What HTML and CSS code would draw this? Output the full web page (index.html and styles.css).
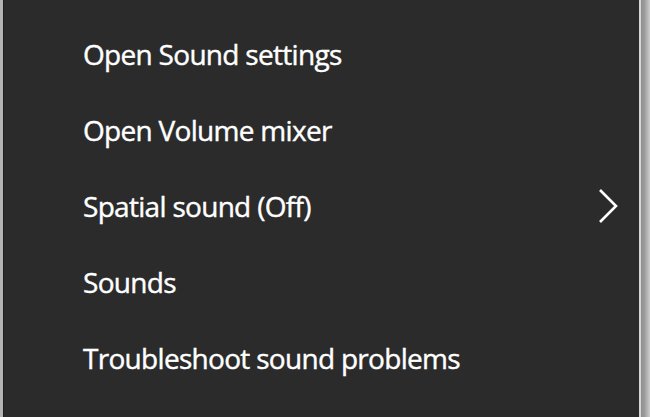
FILE: index.html
```html
<!DOCTYPE html>
<html>
<head>
<meta charset="utf-8">
<link rel="stylesheet" href="styles.css">
</head>
<body>
<div class="frame">
  <ul class="menu">
    <li class="item">Open Sound settings</li>
    <li class="item">Open Volume mixer</li>
    <li class="item has-sub">Spatial sound (Off)
      <svg class="chevron" width="22" height="36" viewBox="0 0 22 36"><path d="M3 2 L19 18 L3 34" fill="none" stroke="#ffffff" stroke-width="2.6"/></svg>
    </li>
    <li class="item">Sounds</li>
    <li class="item">Troubleshoot sound problems</li>
  </ul>
  <div class="edge"></div>
</div>
</body>
</html>
```
FILE: styles.css
```css
html, body {
  margin: 0;
  padding: 0;
  background: #2b2b2b;
}
.frame {
  display: flex;
  width: 650px;
  height: 417px;
  overflow: hidden;
}
.menu {
  flex: 1;
  margin: 0;
  padding: 16px 0 0 80px;
  list-style: none;
  border-left: 3px solid #b4b4b4;
  box-shadow: inset 1px 0 0 #1e1e1e;
  background: #2b2b2b;
  font-family: "Open Sans", "Noto Sans", sans-serif;
  font-size: 28px;
  color: #ffffff;
  -webkit-text-stroke: 0.4px #ffffff;
}
.item {
  display: flex;
  align-items: center;
  height: 76px;
  line-height: 76px;
  letter-spacing: -0.7px;
}
.has-sub {
  justify-content: space-between;
  padding-right: 20px;
}
.chevron {
  display: block;
}
.edge {
  width: 9px;
  border-left: 2px solid #d6d6d6;
  background: linear-gradient(to right, #8f8f8f, #9c9c9c 40%, #cfcfcf);
}
```
